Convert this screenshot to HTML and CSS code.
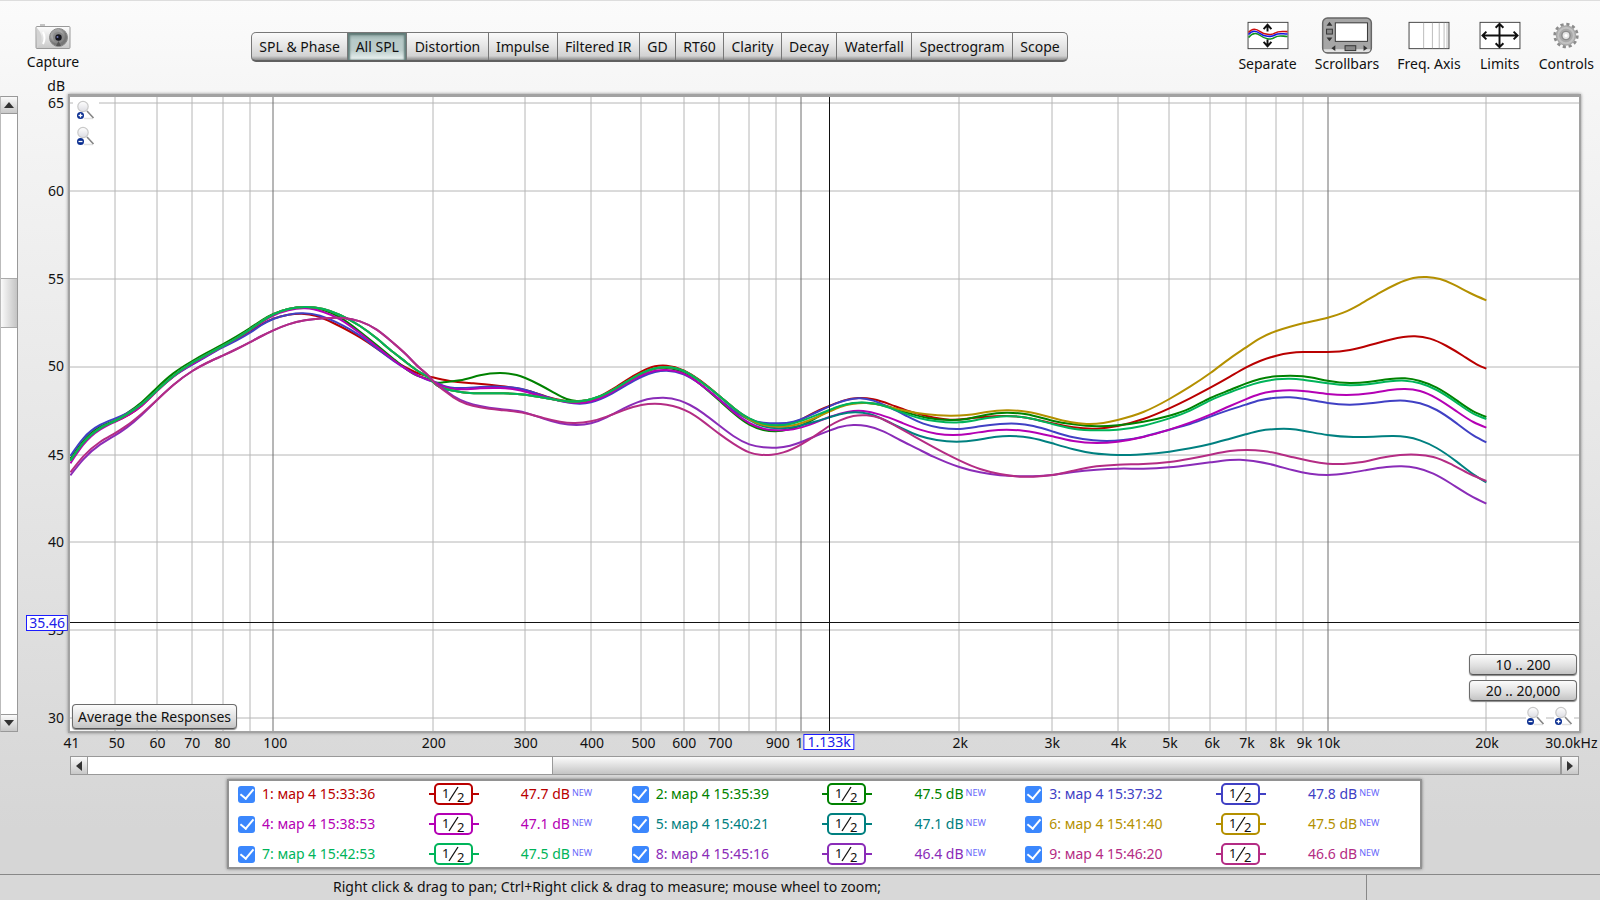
FILE: index.html
```html
<!DOCTYPE html>
<html lang="en">
<head>
<meta charset="utf-8">
<title>All SPL</title>
<link rel="stylesheet" href="styles.css">
</head>
<body>
<svg class="defs" aria-hidden="true">
  <defs>
    <linearGradient id="metal" x1="0" y1="0" x2="0" y2="1"><stop offset="0" stop-color="#fdfdfd"/><stop offset="1" stop-color="#c8c8c8"/></linearGradient>
    <radialGradient id="lens" cx=".4" cy=".35"><stop offset="0" stop-color="#8a8a8a"/><stop offset=".6" stop-color="#a8a8a8"/><stop offset="1" stop-color="#777"/></radialGradient>
    <linearGradient id="glass" x1="0" y1="0" x2="0" y2="1"><stop offset="0" stop-color="#fff"/><stop offset="1" stop-color="#dcdce2"/></linearGradient>
    <symbol id="magnifier" viewBox="0 0 20 20">
      <path d="M8 18.500h9" stroke="#e2e2e2" stroke-width="1.500"/>
      <circle cx="7" cy="6.500" r="5.200" fill="url(#glass)" stroke="#c9c9c9" stroke-width="1.200"/>
      <path d="M11 11l6.500 7" stroke="#858585" stroke-width="1.600"/>
      <circle cx="4.500" cy="15.500" r="3.500" fill="#0b2f91"/>
      <path d="M2.500 15.500h4" stroke="#fff" stroke-width="1.300"/>
    </symbol>
  </defs>
</svg>

<header class="toolbar">
  <button class="tool capture" type="button">
    <svg width="36" height="26" viewBox="0 0 36 26">
      <path d="M5 0h5v3H5z" fill="#c4c4c4"/>
      <rect x="1" y="2.500" width="34" height="22" rx="1" fill="url(#metal)" stroke="#9a9a9a"/>
      <path d="M2 4q9 10 0 20z" fill="#d3d3d3"/><path d="M8 8q3 6 0 12" fill="none" stroke="#fff" stroke-width="2"/>
      <circle cx="23.500" cy="13.500" r="9" fill="url(#lens)" stroke="#8a8a8a"/>
      <circle cx="23.500" cy="13.500" r="5.500" fill="#888"/><circle cx="23.500" cy="13.500" r="3.200" fill="#15151c"/><circle cx="22.500" cy="13" r="1" fill="#7077b5"/>
      <path d="M21 22l2.500-5 2.500 5z" fill="#555"/>
    </svg>
    Capture
  </button>
  <nav class="tabs">
    <button type="button">SPL &amp; Phase</button><button type="button" class="active">All SPL</button><button type="button">Distortion</button><button type="button">Impulse</button><button type="button">Filtered IR</button><button type="button">GD</button><button type="button">RT60</button><button type="button">Clarity</button><button type="button">Decay</button><button type="button">Waterfall</button><button type="button">Spectrogram</button><button type="button">Scope</button>
  </nav>
  <div class="tools">
    <button class="tool" type="button">
      <svg width="42" height="38" viewBox="0 0 42 38">
        <rect x=".5" y="5.500" width="41" height="27" fill="#fff" stroke="#444"/>
        <g fill="none" stroke-width="1.600">
          <path d="M1 16C5 11 9 12 13 15S24 19 28 16.500S36 15 41 15" stroke="#d01010"/>
          <path d="M1 18C5 13 9 14 13 17S24 21 28 18.500S36 17.500 41 17.500" stroke="#1515e0"/>
          <path d="M1 21C5 16 9 16 13 19S24 24 28 21S36 20 41 20" stroke="#109020"/>
        </g>
        <path d="M20.500 15V9M20.500 23v6M16.500 12.500l4-4.500 4 4.500M16.500 25.500l4 4.500 4-4.500" fill="none" stroke="#111" stroke-width="2"/>
      </svg>
      Separate
    </button>
    <button class="tool" type="button" aria-pressed="true">
      <svg width="52" height="38" viewBox="0 0 52 38">
        <rect x="1" y="1" width="50" height="36" rx="5" fill="#a6a6a6" stroke="#666" stroke-width="1.500"/>
        <path d="M2 33q0 3 4 3h40q4 0 4-3z" fill="#e2e2e2"/>
        <rect x="14" y="6" width="33" height="19" fill="#fff" stroke="#333"/>
        <path d="M8 5l3 4H5zM8 25l3-4H5zM14 29v6l-4-3zM43 29v6l4-3z" fill="#333"/>
        <rect x="5" y="12.500" width="6" height="5" fill="#888" stroke="#333"/><rect x="24" y="29.500" width="11" height="5" fill="#888" stroke="#333"/>
      </svg>
      Scrollbars
    </button>
    <button class="tool" type="button">
      <svg width="42" height="38" viewBox="0 0 42 38">
        <rect x=".5" y="5.500" width="41" height="27" fill="#fff" stroke="#444"/>
        <path d="M15.500 6v26M24.500 6v26M31.500 6v26M36.500 6v26M39.500 6v26" stroke="#bbb"/>
      </svg>
      Freq. Axis
    </button>
    <button class="tool" type="button">
      <svg width="42" height="38" viewBox="0 0 42 38">
        <rect x=".5" y="5.500" width="41" height="27" fill="#fff" stroke="#444"/>
        <path d="M3 19h36M20.500 7v24M7 15l-4 4 4 4M35 15l4 4-4 4M16.500 11l4-4 4 4M16.500 27l4 4 4-4" fill="none" stroke="#111" stroke-width="2"/>
      </svg>
      Limits
    </button>
    <button class="tool" type="button">
      <svg width="28" height="38" viewBox="-14 -19 28 38">
        <circle r="11.500" fill="none" stroke="#8c8c8c" stroke-width="3" stroke-dasharray="3.200 2.820"/>
        <circle r="10.500" fill="#a9a9a9"/><circle r="8" fill="none" stroke="#c2c2c2" stroke-width="2"/>
        <circle r="5" fill="#8c8c8c"/><circle r="3.500" fill="#e6e6e6"/><circle r="1.600" fill="#fff"/>
      </svg>
      Controls
    </button>
  </div>
</header>

<main class="workspace">
  <div class="scrollbar vertical">
    <button type="button" aria-label="Scroll up"><svg width="10" height="6"><path d="M0 6l5-6 5 6z"/></svg></button>
    <div class="track"><div class="thumb"></div></div>
    <button type="button" aria-label="Scroll down"><svg width="10" height="6"><path d="M0 0l5 6 5-6z"/></svg></button>
  </div>
  <div class="y-axis">
    <span class="unit">dB</span>
    <span style="top:0.9%">65</span><span style="top:14.8%">60</span><span style="top:28.7%">55</span><span style="top:42.5%">50</span><span style="top:56.4%">45</span><span style="top:70.2%">40</span><span style="top:84.1%">35</span><span style="top:98%">30</span>
    <span class="readout" style="top:82.9%">35.46</span>
  </div>
  <section class="chart">
    <svg class="plot" id="plot" viewBox="70 97 1509 634" preserveAspectRatio="none" role="img" aria-label="SPL responses"></svg>
    <div class="zoom-y">
      <button type="button" aria-label="Zoom in vertically"><svg width="20" height="20"><use href="#magnifier"/><path d="M4.500 13.500v4" stroke="#fff" stroke-width="1.300"/></svg></button>
      <button type="button" aria-label="Zoom out vertically"><svg width="20" height="20"><use href="#magnifier"/></svg></button>
    </div>
    <button class="push average" type="button">Average the Responses</button>
    <div class="ranges">
      <button class="push" type="button">10 .. 200</button>
      <button class="push" type="button">20 .. 20,000</button>
      <div class="zoom-x">
        <button type="button" aria-label="Zoom out horizontally"><svg width="20" height="20"><use href="#magnifier"/></svg></button>
        <button type="button" aria-label="Zoom in horizontally"><svg width="20" height="20"><use href="#magnifier"/><path d="M4.500 13.500v4" stroke="#fff" stroke-width="1.300"/></svg></button>
      </div>
    </div>
  </section>
  <div class="x-axis">
    <span style="left:0.1%">41</span><span style="left:3.1%">50</span><span style="left:5.8%">60</span><span style="left:8.1%">70</span><span style="left:10.1%">80</span><span style="left:13.6%">100</span><span style="left:24.1%">200</span><span style="left:30.2%">300</span><span style="left:34.6%">400</span><span style="left:38%">500</span><span style="left:40.7%">600</span><span style="left:43.1%">700</span><span style="left:46.9%">900</span><span style="left:48.6%">1k</span><span style="left:59%">2k</span><span style="left:65.1%">3k</span><span style="left:69.5%">4k</span><span style="left:72.9%">5k</span><span style="left:75.7%">6k</span><span style="left:78%">7k</span><span style="left:80%">8k</span><span style="left:81.8%">9k</span><span style="left:83.4%">10k</span><span style="left:93.9%">20k</span><span style="left:99.5%">30.0kHz</span>
    <span class="readout" style="left:50.3%">1.133k</span>
  </div>
  <div class="scrollbar horizontal">
    <button type="button" aria-label="Scroll left"><svg width="6" height="10"><path d="M6 0L0 5l6 5z"/></svg></button>
    <div class="track"><div class="thumb"></div></div>
    <button type="button" aria-label="Scroll right"><svg width="6" height="10"><path d="M0 0l6 5-6 5z"/></svg></button>
  </div>
</main>

<section class="legend" id="legend"></section>

<footer class="status"><p>Right click &amp; drag to pan; Ctrl+Right click &amp; drag to measure; mouse wheel to zoom;</p><div></div></footer>
<script src="script.js"></script>
</body>
</html>
```
FILE: styles.css
```css
* { box-sizing: border-box; }

body {
  margin: 0;
  min-height: 100vh;
  display: flex;
  flex-direction: column;
  overflow: hidden;
  border-top: 1px solid #ddd;
  background: linear-gradient(#fbfbfb, #f5f5f5 12%, #d6d6d6 92%);
  color: #111;
  font: 14px/18px "Noto Sans", "DejaVu Sans", sans-serif;
}

button {
  margin: 0;
  padding: 0;
  border: 0;
  background: none;
  color: inherit;
  font: inherit;
}

.defs { position: absolute; width: 0; height: 0; }

.toolbar {
  display: flex;
  align-items: flex-start;
  height: 93px;
  padding: 16px 6px 0 28px;
}

.tool {
  display: flex;
  flex-direction: column;
  align-items: center;
  justify-content: flex-end;
  height: 56px;
  white-space: nowrap;
  gap: 1px;
}

.capture { width: 50px; height: 54px; gap: 3px; }

.tools { display: flex; gap: 18px; margin-left: auto; }

.tabs {
  display: flex;
  flex: 0 1 817px;
  height: 30px;
  margin: 15px 0 0 173px;
  border: 1px solid #777;
  border-bottom: 2px solid #606060;
  border-radius: 5px;
  overflow: hidden;
  background: linear-gradient(#fafafa, #e4e4e4 50%, #d2d2d2 85%, #8d8d8d);
}

.tabs button {
  flex: 1 1 auto;
  border-right: 1px solid #777;
  white-space: nowrap;
}

.tabs button:last-child { border-right: 0; }

.tabs .active {
  background: linear-gradient(#8fa8a5, #b6c9c7 25%, #bccdcb 65%, #edf5f4);
  box-shadow: inset 2px 0 2px #647f7c, inset -2px 0 2px #647f7c, inset 0 2px 2px #5d7673;
}

.workspace {
  display: grid;
  flex: 1;
  grid-template-columns: 18px 50px 1fr 19px;
  grid-template-rows: 1fr 23px 19px;
}

.scrollbar { display: flex; border: 1px solid #999; background: #fff; }

.scrollbar button {
  display: flex;
  align-items: center;
  justify-content: center;
  flex: 0 0 17px;
  background: linear-gradient(#fafafa, #c8c8c8);
  fill: #333;
}

.track { display: flex; flex: 1; }

.vertical { flex-direction: column; margin: 2px 0 1px; border-left-color: #bbb; }
.vertical button:first-child { border-bottom: 1px solid #999; }
.vertical button:last-child { border-top: 1px solid #999; }
.vertical .track { flex-direction: column; padding-top: 164px; }
.vertical .thumb {
  flex: 0 0 50px;
  border: solid #aaa;
  border-width: 1px 0;
  background: linear-gradient(90deg, #fafafa, #c4c4c4);
}

.horizontal { grid-column: 3; margin: 0 2px; }
.horizontal button:first-child { border-right: 1px solid #999; }
.horizontal button:last-child { border-left: 1px solid #999; }
.horizontal .track { justify-content: flex-end; }
.horizontal .thumb {
  width: 68.5%;
  border: solid #999;
  border-width: 0 1px;
  background: linear-gradient(#fbfbfb, #c4c4c4);
}

.y-axis { position: relative; margin: 3px 0 2px; }
.y-axis span { position: absolute; right: 4px; transform: translateY(-50%); }
.y-axis .unit { top: -11px; right: 3px; }

.x-axis { grid-column: 3; position: relative; margin: 0 2px; }
.x-axis span { position: absolute; top: 1px; transform: translateX(-50%); white-space: nowrap; }

.y-axis .readout,
.x-axis .readout {
  border: 1px solid #1c1cff;
  background: #fff;
  color: #2020e8;
  line-height: 14px;
}

.y-axis .readout { right: 0; padding: 0 2px; }
.x-axis .readout { padding: 0 3px; }

.chart {
  position: relative;
  border: 2px solid #a2a2a2;
  border-top-width: 3px;
  background: #fff;
  box-shadow: 0 0 3px #888;
}

.plot { position: absolute; top: 0; left: 0; width: 100%; height: 100%; }
.plot * { vector-effect: non-scaling-stroke; fill: none; }
.grid { stroke: #b6b6b6; stroke-width: 1; }
.decade { stroke: #6e6e6e; stroke-width: 1; }
.trace { stroke-width: 2; stroke-linejoin: round; }
.cursor { stroke: #111; stroke-width: 1; }

.zoom-y { position: absolute; top: 3px; left: 3px; display: grid; gap: 6px; }
.zoom-y button,
.zoom-x button { display: grid; justify-content: center; background: #fff; }
.zoom-y button { width: 26px; }

.push {
  height: 21px;
  border: 1px solid #6c6c6c;
  border-bottom-color: #555;
  border-radius: 4px;
  background: linear-gradient(#fcfcfc, #dedede 60%, #c4c4c4);
  box-shadow: 0 1px 1px #888;
  line-height: 18px;
}

.average { position: absolute; left: 2px; bottom: 2px; width: 165px; height: 25px; white-space: nowrap; }

.ranges { position: absolute; right: 2px; bottom: 5px; display: grid; gap: 5px; width: 108px; }
.zoom-x { display: flex; justify-content: flex-end; gap: 8px; padding-right: 3px; }

.legend {
  display: grid;
  grid-template-columns: repeat(3, 1fr);
  grid-auto-rows: 30px;
  align-content: center;
  align-items: center;
  height: 90px;
  margin: 4px 178px 5px 227px;
  padding: 0 1px 0 9px;
  border: 2px solid #929292;
  background: #fff;
  box-shadow: 0 0 3px #777;
}

.entry { display: grid; grid-template-columns: 191fr 92fr 111fr; align-items: center; }
.entry label { display: flex; align-items: center; gap: 7px; white-space: nowrap; }

.entry input {
  appearance: none;
  display: grid;
  place-items: center;
  width: 17px;
  height: 17px;
  margin: 0;
  border-radius: 3px;
  background: #3b87fd;
}

.entry input:checked::after {
  content: "";
  width: 6px;
  height: 11px;
  margin-bottom: 3px;
  border: solid #fff;
  border-width: 0 2px 2px 0;
  transform: rotate(40deg);
}

.entry button { display: block; height: 22px; }
.entry button svg { display: block; }
.entry button text { fill: #111; font-size: 13px; }
.level { display: flex; gap: 2px; }
.level sup { color: #6868fa; font-size: 9px; line-height: 16px; }

.status {
  display: grid;
  grid-template-columns: 1366fr 234fr;
  height: 26px;
  border-top: 1px solid #888;
  background: #d8d8d8;
}

.status p { margin: 0; padding: 3px 0 0 333px; white-space: nowrap; }
.status div { border-left: 1px solid #888; }
```
FILE: script.js
```js
const NS = "http://www.w3.org/2000/svg";
const plot = document.getElementById("plot");

function add(name, attrs) {
  const node = document.createElementNS(NS, name);
  for (const key in attrs) node.setAttribute(key, attrs[key]);
  plot.appendChild(node);
}

// Grid positions in plot units
const columns = [115, 157, 192, 223, 250, 433, 525, 591, 641, 684, 719, 749, 776, 959, 1052, 1118, 1169, 1210, 1246, 1276, 1303, 1486];
const decades = [273, 801, 1328];
const rows = [103, 191, 279, 367, 455, 542, 630, 718];

// Trace samples are stored per frequency band, three steps to a plot unit
const bands = [[60, 290], [400, 340], [820, 370], [1180, 260]];
const rise = [31,512,70,458,120,415,164,393,200,373,245,342,291,301,340,258,397,218,440,194,488,168,530,144,569,119,605,94,640,73,685,57,735,51,790,57,840,75,900,108,950,145,1000,187,1040,218,1080,247,1110,266];
const lowRise = [291,330,340,285,397,243,440,219,488,197,530,177,569,157,605,138,640,121,685,103,735,91,790,85,850,84,900,94,950,119,1000,159,1040,195,1080,235,1110,262];
const crest = [98,125,150,150,200,158,250,160,310,160,376,164,440,175,500,184,540,184,573,178,630,155,680,125,724,100,765,85,800,82,851,93,900,123,957,167,1000,203];

const traces = [
  { name: "1: мар 4 15:33:36", level: "47.7", color: "#b90000", data: [
    [31,512,70,459,120,415,164,395,245,347,291,302,340,259,397,222,440,197,488,169,530,147,569,125,605,103,640,86,685,74,725,71,770,78,820,99,900,142,950,175,1000,210,1040,234,1080,252,1110,260],
    [98,112,150,123,220,130,300,138,376,150,440,170,500,184,540,187,573,180,630,152,680,120,724,95,765,79,800,77,851,91,900,121,957,167,1000,203,1048,236,1090,252,1135,256,1204,238,1250,214,1288,198],
    [70,92,115,84,160,88,210,103,260,121,320,138,390,149,450,145,500,140,560,138,620,143,697,160,760,172,830,176,893,168,970,147,1048,115,1110,85],
    [91,383,150,350,197,323,240,303,289,287,330,279,369,276,443,276,510,270,570,255,630,239,670,231,705,229,750,236,800,258,850,288,890,313,919,326]] },
  { name: "2: мар 4 15:35:39", level: "47.5", color: "#008200", data: [
    [31,506,70,453,120,411,164,391,200,370,245,337,291,293,340,250,397,213,440,189,488,163,530,139,569,115,605,91,640,72,685,57,735,51,790,60,840,82,900,125,950,165,1000,206,1040,238,1080,260,1110,270],
    [98,125,130,127,180,121,240,106,300,99,350,105,376,114,420,135,460,157,500,177,530,183,560,181,630,158,680,128,724,101,765,86,800,84,851,98,900,132,957,181,1000,219,1048,254,1090,270,1125,274,1170,267,1230,244,1288,212],
    [60,109,100,100,140,99,190,106,260,128,320,143,390,150,440,147,500,134,560,128,620,133,697,152,760,163,830,169,893,166,970,155,1048,137,1110,115],
    [91,414,150,390,197,371,240,357,289,349,330,347,369,349,443,362,510,369,570,365,630,357,675,355,720,363,770,383,830,421,880,454,919,471]] },
  { name: "3: мар 4 15:37:32", level: "47.8", color: "#4040c4", data: [
    [31,498,70,445,120,405,164,386,200,370,245,342,291,302,340,260,397,224,440,199,488,172,530,151,569,129,605,105,640,87,685,74,730,70,780,77,830,97,900,137,950,175,1000,212,1040,238,1080,260,1110,272],
    [98,124,130,137,180,144,240,141,300,140,350,144,376,150,420,164,460,177,500,187,540,191,573,187,630,164,680,135,724,111,765,96,800,92,851,103,900,132,957,177,1000,211,1048,238,1090,248,1135,250,1180,245,1230,226,1288,199],
    [60,96,100,86,120,85,160,92,210,113,260,138,310,161,360,173,420,177,480,169,540,162,590,161,640,168,697,184,760,202,820,211,860,213,910,210,970,200,1048,179,1110,162],
    [91,470,150,449,197,434,240,421,289,413,330,412,369,416,443,429,510,434,570,430,630,423,675,422,720,430,770,450,830,490,880,526,919,547]] },
  { name: "4: мар 4 15:38:53", level: "47.1", color: "#b400b4", data: [
    [31,520,70,464,120,419,164,396,245,347,291,303,340,260,397,222,440,197,488,169,530,145,569,121,605,97,640,77,685,61,735,55,790,66,840,88,900,130,950,170,1000,210,1040,238,1080,260,1110,271],
    [98,124,130,139,180,148,240,145,300,144,350,149,376,155,440,173,500,186,540,189,573,184,630,160,680,130,724,106,765,92,800,90,851,101,900,132,957,178,1000,216,1048,249,1090,266,1135,271,1180,268,1230,254,1288,231],
    [60,131,100,123,130,123,180,134,240,156,300,179,350,191,400,195,450,191,510,182,560,179,610,182,697,199,760,213,830,219,893,215,970,201,1048,179,1110,158],
    [91,464,150,438,197,418,240,402,289,393,330,391,369,393,443,402,500,405,570,400,630,390,675,387,720,393,770,415,830,454,880,486,919,503]] },
  { name: "5: мар 4 15:40:21", level: "47.1", color: "#008080", data: [
    rise, [...crest, 1048,240,1090,259,1135,265,1180,261,1230,249,1288,232],
    [60,133,105,127,150,133,200,153,250,177,300,198,350,210,410,215,470,210,530,200,570,198,630,203,697,220,760,238,820,250,893,255,930,255,970,253,1048,245,1110,235],
    [91,552,150,536,197,523,240,512,289,507,330,507,369,512,443,525,520,531,580,530,640,528,680,531,720,541,770,564,830,605,880,643,919,667]] },
  { name: "6: мар 4 15:41:40", level: "47.5", color: "#b49000", data: [
    rise, [...crest, 1048,238,1090,255,1135,260,1180,256,1230,240,1288,215],
    [60,111,100,101,140,99,190,107,260,123,320,133,390,137,440,135,500,126,560,121,620,125,697,143,750,156,800,162,850,159,893,150,970,126,1048,87,1110,50],
    [91,339,150,295,197,263,240,235,289,213,330,200,369,190,443,173,490,158,540,133,600,98,650,72,700,54,740,51,780,57,820,73,870,99,919,121]] },
  { name: "7: мар 4 15:42:53", level: "47.5", color: "#00b45a", data: [
    rise, [...crest, 1048,235,1090,251,1135,256,1180,250,1230,233,1288,210],
    [60,108,100,99,140,98,180,104,240,125,300,145,350,154,418,157,480,148,560,139,620,143,697,162,760,176,830,181,893,179,970,167,1048,145,1110,122],
    [91,421,150,397,197,380,240,367,289,358,330,356,369,359,443,370,510,376,570,372,630,364,675,362,720,370,770,390,830,428,880,461,919,477]] },
  { name: "8: мар 4 15:45:16", level: "46.4", color: "#8a2cb8", data: [
    [31,556,70,508,120,464,164,437,200,413,245,375, ...lowRise],
    [98,121,130,147,160,168,200,187,240,198,300,207,376,218,430,236,480,250,530,255,573,250,620,232,670,206,724,183,760,175,790,173,840,182,870,195,910,220,957,256,1000,288,1048,313,1090,322,1130,323,1170,317,1204,306,1250,287,1288,272],
    [60,171,100,165,140,168,190,184,240,210,290,235,340,260,380,277,418,291,480,307,540,316,600,319,697,315,760,306,830,299,893,296,970,296,1048,292,1110,285],
    [91,607,150,600,180,599,220,603,289,617,340,631,390,641,443,645,500,640,560,630,620,621,665,619,710,624,760,641,810,669,870,706,919,731]] },
  { name: "9: мар 4 15:46:20", level: "46.6", color: "#b42c84", data: [
    [31,547,70,499,120,456,164,430,200,407,245,371, ...lowRise],
    [98,122,130,150,160,172,200,192,240,202,300,210,376,220,430,234,480,245,520,249,573,244,620,230,670,211,724,195,765,191,800,194,870,218,910,245,957,281,1000,311,1048,337,1080,344,1115,344,1150,337,1204,313,1250,284,1288,258],
    [60,151,100,138,140,136,180,144,220,164,270,192,320,220,370,247,418,271,480,297,540,312,600,320,640,320,697,315,760,302,830,289,893,284,970,282,1048,276,1110,266],
    [91,584,150,573,200,570,250,573,289,580,340,592,390,603,443,611,490,612,540,607,600,594,660,585,710,584,760,591,810,611,870,642,919,663]] }
];

function tracePath(data) {
  const pts = [];
  data.forEach((band, i) => {
    for (let k = 0; k < band.length; k += 2) {
      pts.push([bands[i][0] + band[k] / 3, bands[i][1] + band[k + 1] / 3]);
    }
  });
  const n = pts.length;
  const h = [];
  const s = [];
  for (let i = 1; i < n; i++) {
    h.push(pts[i][0] - pts[i - 1][0]);
    s.push((pts[i][1] - pts[i - 1][1]) / h[i - 1]);
  }

  // Natural cubic spline: solve the tridiagonal system for the slopes
  const upper = [0.5];
  const slope = [1.5 * s[0]];
  for (let i = 1; i < n; i++) {
    const last = i === n - 1;
    const low = last ? 1 : h[i];
    const mid = last ? 2 : 2 * (h[i - 1] + h[i]);
    const up = last ? 0 : h[i - 1];
    const rhs = last ? 3 * s[i - 1] : 3 * (h[i] * s[i - 1] + h[i - 1] * s[i]);
    const m = mid - low * upper[i - 1];
    upper.push(up / m);
    slope.push((rhs - low * slope[i - 1]) / m);
  }
  for (let i = n - 2; i >= 0; i--) slope[i] -= upper[i] * slope[i + 1];

  let d = `M${pts[0][0]} ${pts[0][1]}`;
  for (let i = 1; i < n; i++) {
    const [x0, y0] = pts[i - 1];
    const [x1, y1] = pts[i];
    const t = (x1 - x0) / 3;
    d += `C${x0 + t} ${y0 + t * slope[i - 1]} ${x1 - t} ${y1 - t * slope[i]} ${x1} ${y1}`;
  }
  return d;
}

columns.forEach(x => add("path", { class: "grid", d: `M${x} 97V731` }));
rows.forEach(y => add("path", { class: "grid", d: `M70 ${y}H1579` }));
decades.forEach(x => add("path", { class: "decade", d: `M${x} 97V731` }));
traces.forEach(t => add("path", { class: "trace", stroke: t.color, d: tracePath(t.data) }));
add("path", { class: "cursor", d: "M829.5 97V735" });
add("path", { class: "cursor", d: "M70 622.5H1579" });

document.getElementById("legend").innerHTML = traces.map((t, i) => `
  <div class="entry" style="color:${t.color}">
    <label for="trace${i}"><input type="checkbox" id="trace${i}" checked>${t.name}</label>
    <button type="button" aria-label="Smoothing">
      <svg width="50" height="22" viewBox="0 0 50 22">
        <path d="M0 11h6M43 11h7" stroke="${t.color}" stroke-width="2"/>
        <rect x="6" y="1" width="37" height="20" rx="4" fill="#fff" stroke="${t.color}" stroke-width="2"/>
        <path d="M20 18l9-14" stroke="#111" stroke-width="1.3"/>
        <text x="13" y="15">1</text><text x="28" y="19">2</text>
      </svg>
    </button>
    <span class="level">${t.level} dB<sup>NEW</sup></span>
  </div>`).join("");
```
